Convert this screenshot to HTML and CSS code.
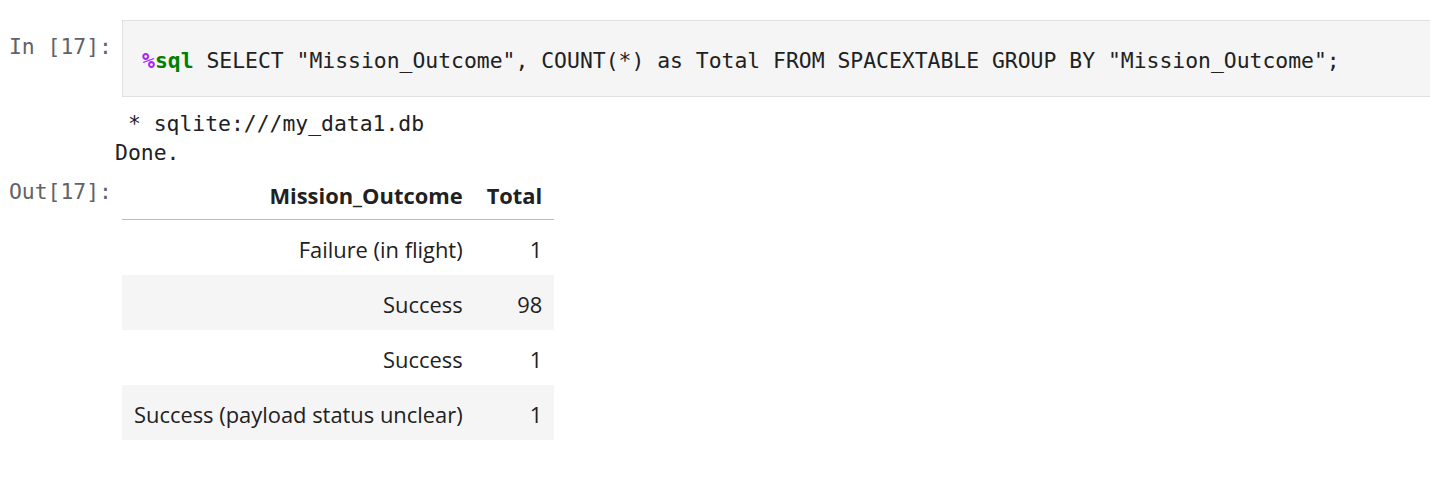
FILE: index.html
```html
<!DOCTYPE html>
<html>
<head>
<meta charset="utf-8">
<link rel="stylesheet" href="styles.css">
</head>
<body>
<div class="cell">
  <div class="input-row">
    <div class="prompt in-prompt">In [17]:</div>
    <div class="editor"><span class="magic-op">%</span><span class="magic-kw">sql</span> SELECT "Mission_Outcome", COUNT(*) as Total FROM SPACEXTABLE GROUP BY "Mission_Outcome";</div>
  </div>
  <div class="stream">
    <div class="stream-line"> * sqlite:///my_data1.db</div>
    <div class="stream-line">Done.</div>
  </div>
  <div class="output-row">
    <div class="prompt out-prompt">Out[17]:</div>
    <table class="result">
      <thead>
        <tr><th>Mission_Outcome</th><th>Total</th></tr>
      </thead>
      <tbody>
        <tr><td>Failure (in flight)</td><td>1</td></tr>
        <tr><td>Success</td><td>98</td></tr>
        <tr><td>Success</td><td>1</td></tr>
        <tr><td>Success (payload status unclear)</td><td>1</td></tr>
      </tbody>
    </table>
  </div>
</div>
</body>
</html>
```

FILE: styles.css
```css
html, body {
  margin: 0;
  padding: 0;
  background: #ffffff;
}

.cell {
  padding-top: 20px;
  font-family: "DejaVu Sans Mono", "Liberation Mono", monospace;
  font-size: 21.4px;
  color: #212121;
}

.input-row {
  display: flex;
  align-items: flex-start;
}

.prompt {
  flex: none;
  width: 112px;
  text-align: right;
  color: #5f6368;
  line-height: 29px;
  white-space: pre;
}

.in-prompt {
  padding-top: 12px;
}

.editor {
  flex: 1;
  margin-left: 10px;
  background: #f5f5f5;
  border: 1px solid #e0e0e0;
  border-right: none;
  padding: 25px 0 21px 19px;
  line-height: 29px;
  white-space: pre;
  overflow: hidden;
}

.magic-op {
  color: #aa22ff;
  font-weight: bold;
}

.magic-kw {
  color: #008000;
  font-weight: bold;
}

.stream {
  margin-top: 12px;
  padding-left: 115px;
}

.stream-line {
  line-height: 29px;
  white-space: pre;
}

.output-row {
  display: flex;
  align-items: flex-start;
}

.out-prompt {
  padding-top: 10px;
}

.result {
  margin-left: 10px;
  border-collapse: collapse;
  font-family: "Open Sans", "Noto Sans", sans-serif;
  font-size: 21.9px;
  color: #212121;
}

.result th,
.result td {
  text-align: right;
  padding: 4px 12px 0 12px;
  white-space: nowrap;
}

.result th {
  font-weight: bold;
  height: 48px;
  border-bottom: 1px solid #bdbdbd;
}

.result td {
  height: 51px;
}

.result tbody tr:nth-child(even) {
  background: #f5f5f5;
}
```
